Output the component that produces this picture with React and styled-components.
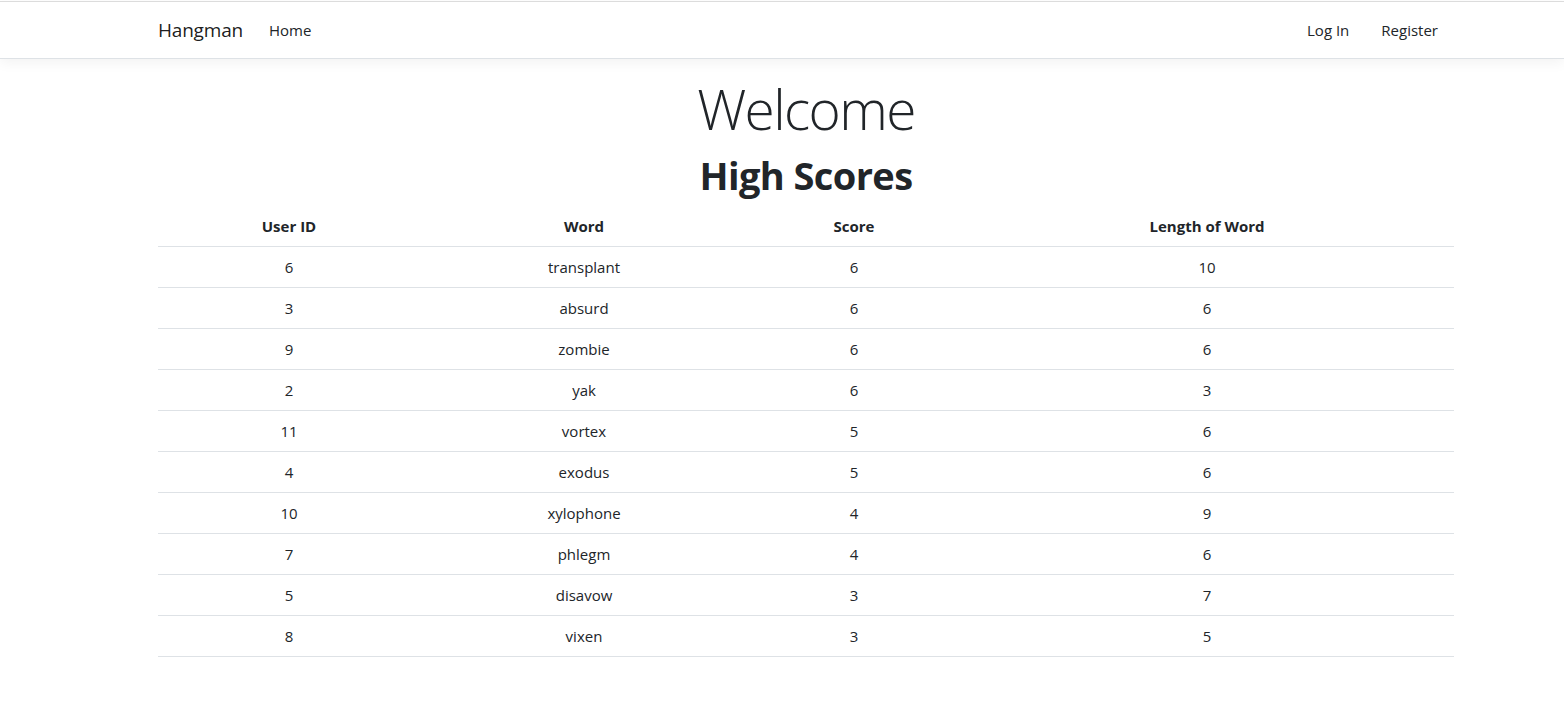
import React from "react";
import styled, { createGlobalStyle } from "styled-components";

const GlobalStyle = createGlobalStyle`
    html, body {
        margin: 0;
        padding: 0;
        background: #ffffff;
    }
    body {
        font-family: "Open Sans", "Noto Sans", "Liberation Sans", sans-serif;
        font-size: 15px;
        line-height: 1.5;
        color: #212529;
        padding-top: 1px;
    }
`;

const Header = styled.header`
    border-top: 1px solid #dcdcdc;
    border-bottom: 1px solid #dee2e6;
    box-shadow: 0 4px 12px rgba(0, 0, 0, 0.05);
    background: #ffffff;
    margin-bottom: 17px;
`;

const Navbar = styled.nav`
    width: 1296px;
    margin-left: 158px;
    display: flex;
    align-items: center;
    justify-content: space-between;
    padding: 8px 0;
`;

const NavGroup = styled.div`
    display: flex;
    align-items: center;
`;

const Brand = styled.a`
    font-size: 19px;
    line-height: 30px;
    padding: 5px 0;
    margin-right: 18px;
    color: rgba(0, 0, 0, 0.9);
    text-decoration: none;
    letter-spacing: -0.2px;
`;

const NavLink = styled.a`
    font-size: 15px;
    line-height: 24px;
    padding: 8px;
    margin: ${(p) => (p.$wide ? "0 8px" : "0")};
    color: #212529;
    text-decoration: none;
`;

const Main = styled.main`
    width: 1296px;
    margin-left: 158px;
    text-align: center;
`;

const Welcome = styled.h1`
    font-size: 55px;
    font-weight: 300;
    line-height: 1.2;
    margin: 0 0 8px;
    letter-spacing: -1.6px;
`;

const Title = styled.h2`
    font-size: 38px;
    font-weight: 700;
    line-height: 1.2;
    margin: 0 0 7px;
    padding-top: 3px;
    letter-spacing: -0.6px;
`;

const Table = styled.table`
    width: 100%;
    border-collapse: collapse;
    table-layout: fixed;
`;

const Th = styled.th`
    box-sizing: border-box;
    width: ${(p) => p.$w}px;
    font-size: 15px;
    font-weight: 700;
    padding: 8px;
    line-height: 24px;
    border-bottom: 1px solid #dee2e6;
`;

const Td = styled.td`
    font-size: 15px;
    padding: 8px;
    line-height: 24px;
    border-bottom: 1px solid #dee2e6;
`;

const columns = [
    { label: "User ID", w: 262 },
    { label: "Word", w: 328 },
    { label: "Score", w: 212 },
    { label: "Length of Word", w: 494 },
];

const scores = [
    [6, "transplant", 6, 10],
    [3, "absurd", 6, 6],
    [9, "zombie", 6, 6],
    [2, "yak", 6, 3],
    [11, "vortex", 5, 6],
    [4, "exodus", 5, 6],
    [10, "xylophone", 4, 9],
    [7, "phlegm", 4, 6],
    [5, "disavow", 3, 7],
    [8, "vixen", 3, 5],
];

const App = () => {
    return (
        <>
            <GlobalStyle />
            <Header>
                <Navbar>
                    <NavGroup>
                        <Brand href="#">Hangman</Brand>
                        <NavLink href="#">Home</NavLink>
                    </NavGroup>
                    <NavGroup>
                        <NavLink href="#" $wide>Log In</NavLink>
                        <NavLink href="#" $wide>Register</NavLink>
                    </NavGroup>
                </Navbar>
            </Header>
            <Main>
                <Welcome>Welcome</Welcome>
                <Title>High Scores</Title>
                <Table>
                    <thead>
                        <tr>
                            {columns.map((c) => (
                                <Th key={c.label} $w={c.w}>{c.label}</Th>
                            ))}
                        </tr>
                    </thead>
                    <tbody>
                        {scores.map((row, i) => (
                            <tr key={i}>
                                {row.map((cell, j) => (
                                    <Td key={j}>{cell}</Td>
                                ))}
                            </tr>
                        ))}
                    </tbody>
                </Table>
            </Main>
        </>
    );
};
export default App;
